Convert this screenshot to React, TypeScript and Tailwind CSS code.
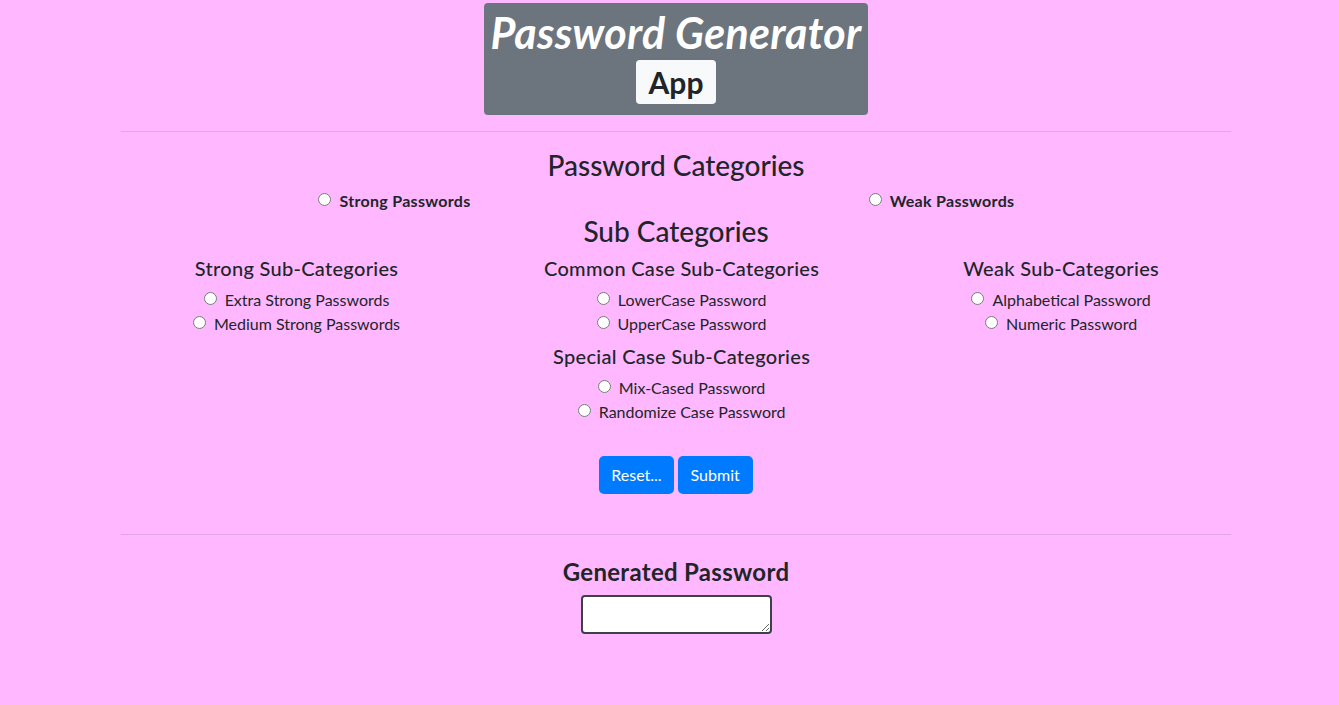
const font = { fontFamily: 'Lato, "Noto Sans", sans-serif' }

function Radio({ name, label, bold }: { name: string; label: string; bold?: boolean }) {
  return (
    <label className={`flex items-center justify-center h-6 ${bold ? 'font-bold text-base tracking-[0.3px]' : 'text-base'}`}>
      <input type="radio" name={name} className="w-[13px] h-[13px] mr-[8px] -mt-[4px]" />
      {label}
    </label>
  )
}

export default function App() {
  return (
    <div className="min-h-[705px] bg-[#ffb8ff] text-[#212529] pl-[13px]" style={font}>
      <div className="w-[1110px] mx-auto pt-[3px]">
        <div className="mx-auto w-[384px] rounded bg-[#6c757d] pt-[6px] pb-[11px] flex flex-col items-center">
          <h1 className="text-[43px] leading-[48px] font-bold italic text-white tracking-[0.3px]">Password Generator</h1>
          <span className="mt-[3px] h-[44px] px-[13px] rounded bg-[#f8f9fa] text-[30px] font-bold leading-[44px]">App</span>
        </div>

        <hr className="mt-[16px] mb-[16px] border-t border-black/10" />

        <h3 className="text-center text-[28px] leading-[34px] font-medium mb-[7px]">Password Categories</h3>
        <div className="grid grid-cols-2 pr-[16px]">
          <Radio name="cat" label="Strong Passwords" bold />
          <Radio name="cat" label="Weak Passwords" bold />
        </div>

        <h3 className="text-center text-[28px] leading-[34px] font-medium mt-[1px] mb-[8px]">Sub Categories</h3>
        <div className="flex justify-around">
          <div className="flex flex-col items-center">
            <h5 className="text-[20px] leading-6 font-medium mb-[8px] tracking-[0.3px]">Strong Sub-Categories</h5>
            <Radio name="sub" label="Extra Strong Passwords" />
            <Radio name="sub" label="Medium Strong Passwords" />
          </div>
          <div className="flex flex-col items-center">
            <h5 className="text-[20px] leading-6 font-medium mb-[8px] tracking-[0.3px]">Common Case Sub-Categories</h5>
            <Radio name="sub" label="LowerCase Password" />
            <Radio name="sub" label="UpperCase Password" />
            <h5 className="text-[20px] leading-6 font-medium mt-[8px] mb-[8px] tracking-[0.3px]">Special Case Sub-Categories</h5>
            <Radio name="sub" label="Mix-Cased Password" />
            <Radio name="sub" label="Randomize Case Password" />
          </div>
          <div className="flex flex-col items-center">
            <h5 className="text-[20px] leading-6 font-medium mb-[8px] tracking-[0.3px]">Weak Sub-Categories</h5>
            <Radio name="sub" label="Alphabetical Password" />
            <Radio name="sub" label="Numeric Password" />
          </div>
        </div>

        <div className="flex justify-center gap-[4px] mt-[32px]">
          <button className="h-[38px] px-[12px] rounded-[5px] bg-[#007bff] text-white text-base">Reset...</button>
          <button className="h-[38px] px-[13px] rounded-[5px] bg-[#007bff] text-white text-base">Submit</button>
        </div>

        <hr className="mt-[40px] mb-[22px] border-t border-black/10" />

        <h4 className="text-center text-[24px] leading-[29px] font-bold tracking-[0.3px]">Generated Password</h4>
        <div className="flex justify-center mt-[9px]">
          <textarea className="w-[191px] h-[39px] rounded-[4px] border-2 border-[#3d4147] bg-white" />
        </div>
      </div>
    </div>
  )
}
